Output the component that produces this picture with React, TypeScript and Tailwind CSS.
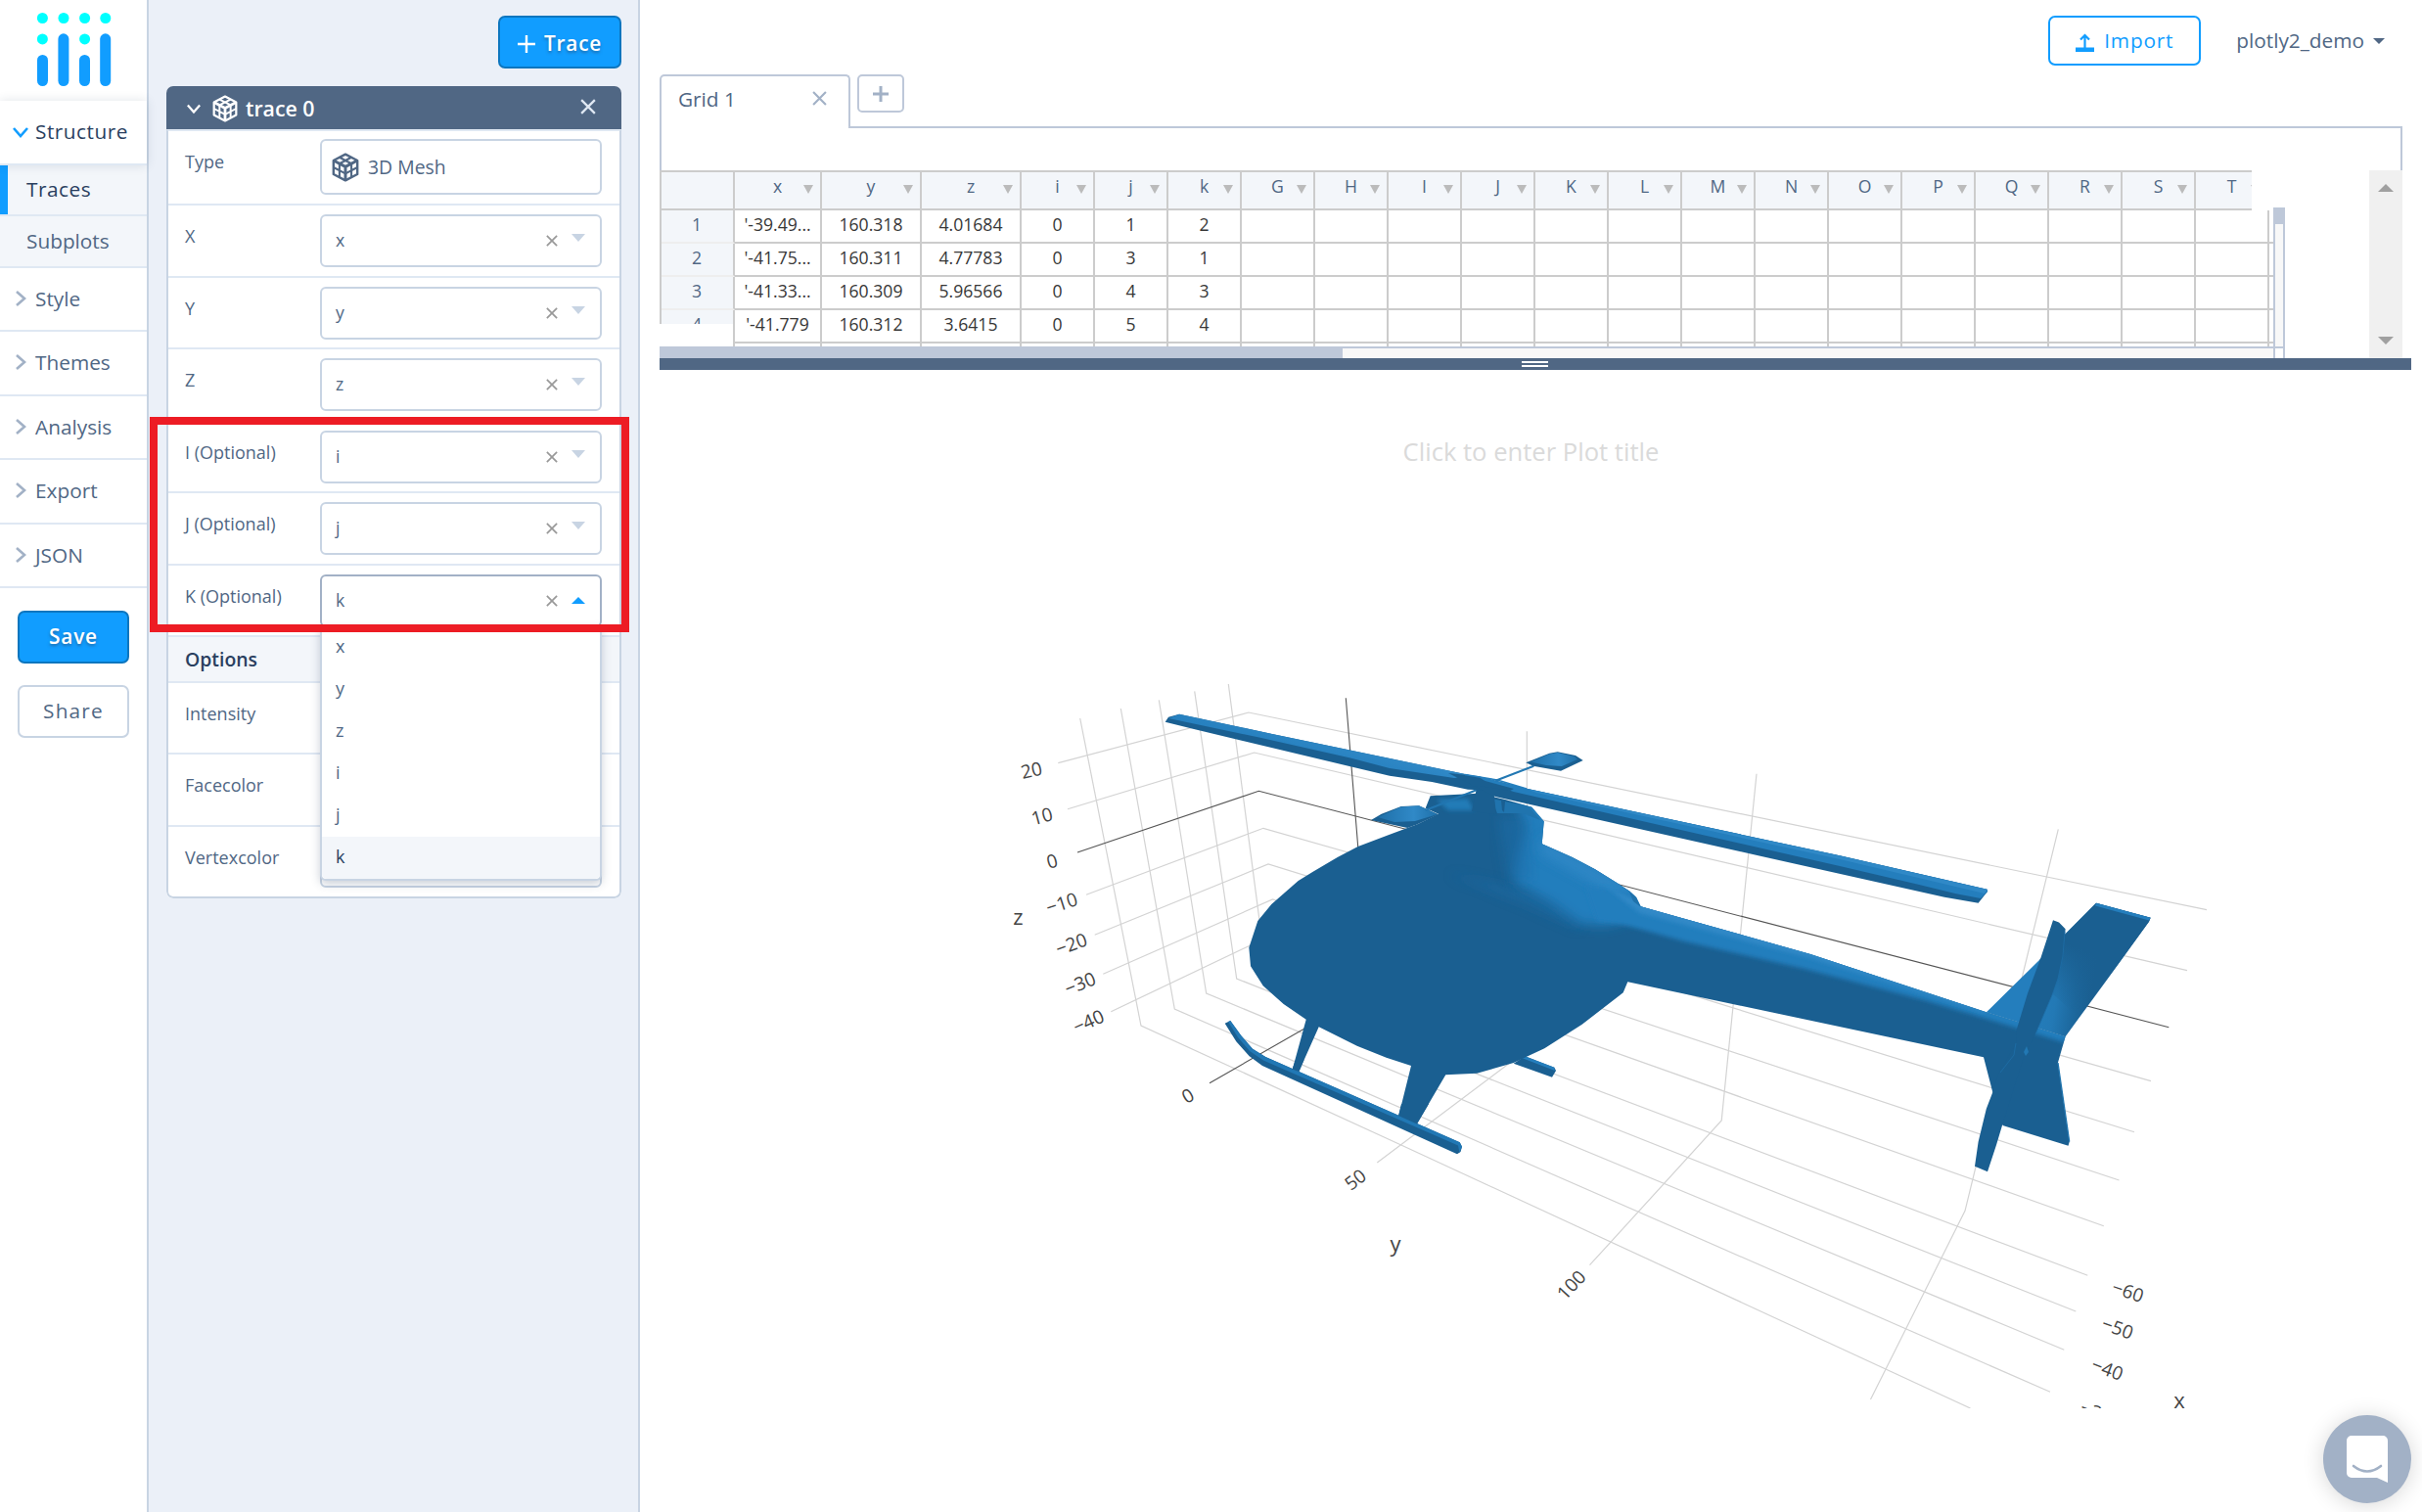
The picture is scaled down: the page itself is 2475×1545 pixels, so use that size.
import React from "react";

const GRID_COLUMNS = ["x", "y", "z", "i", "j", "k", "G", "H", "I", "J", "K", "L", "M", "N", "O", "P", "Q", "R", "S", "T"];
const GRID_ROWS = [
  ["'-39.49...", "160.318", "4.01684", "0", "1", "2"],
  ["'-41.75...", "160.311", "4.77783", "0", "3", "1"],
  ["'-41.33...", "160.309", "5.96566", "0", "4", "3"],
  ["'-41.779", "160.312", "3.6415", "0", "5", "4"],
  [],
];

function columnWidth(index: number) {
  if (index === 0) return "w-[89px]";
  if (index < 3) return "w-[102px]";
  return "w-[75px]";
}

function MeshIcon({ className }: { className: string }) {
  return (
    <svg viewBox="0 0 28 30" className={className} fill="none" stroke="currentColor" strokeWidth="2.4" strokeLinejoin="round">
      <path d="M14 1.6 26.2 8v14L14 28.4 1.8 22V8Z" />
      <path d="M1.8 8 14 14.4 26.2 8M14 14.4v14" strokeWidth="3" />
      <path d="M1.8 15 14 21.4 26.2 15M7.9 11.2v14M20.1 11.2v14M7.9 4.8l12.2 6.4M20.1 4.8 7.9 11.2" strokeWidth="2.1" />
    </svg>
  );
}

function Chevron({ dir, className }: { dir: "down" | "right"; className: string }) {
  return (
    <svg viewBox="0 0 16 16" className={className} fill="none" stroke="currentColor" strokeWidth="2.6">
      <path d={dir === "down" ? "M1 4l7 8 7-8" : "M4 1l8 7-8 7"} />
    </svg>
  );
}

function Cross({ className }: { className: string }) {
  return (
    <svg viewBox="0 0 14 14" className={className} fill="none" stroke="currentColor" strokeWidth="2">
      <path d="M1 1l12 12M13 1L1 13" />
    </svg>
  );
}

function Logo() {
  return (
    <svg viewBox="0 0 76 75" className="ml-[38px] h-[75px] w-[76px]">
      <g fill="#00ffff">
        <circle cx="5.4" cy="5.5" r="5.5" />
        <circle cx="27" cy="5.5" r="5.5" />
        <circle cx="48.6" cy="5.5" r="5.5" />
        <circle cx="69.8" cy="5.5" r="5.5" />
        <circle cx="5.4" cy="26.9" r="5.5" />
        <circle cx="48.6" cy="26.9" r="5.5" />
      </g>
      <g fill="#119dff">
        <rect x="0" y="43" width="11" height="32" rx="5.5" />
        <rect x="21.4" y="21.3" width="11" height="53.7" rx="5.5" />
        <rect x="43" y="43" width="11" height="32" rx="5.5" />
        <rect x="64.2" y="21.3" width="11" height="53.7" rx="5.5" />
      </g>
    </svg>
  );
}

function NavItem({ label, height }: { label: string; height: string }) {
  return (
    <div className={`${height} flex items-center border-b-2 border-[#dfe8f3] pl-[13px] text-[20.8px] text-[#506784]`}>
      <Chevron dir="right" className="mr-[7px] h-[16px] w-[16px] -translate-y-px text-[#a2b1c6]" />
      {label}
    </div>
  );
}

function Sidebar() {
  return (
    <nav className="flex w-[152px] shrink-0 flex-col border-r-2 border-[#c8d4e3] bg-white">
      <div className="h-[103px] pt-[13px]">
        <Logo />
      </div>
      <div className="relative z-10 flex h-[66px] items-center border-b-2 border-[#dfe8f3] bg-white pl-[13px] text-[20.8px] font-semibold tracking-[-0.2px] text-[#2a3f5f] shadow-[0_0_10px_rgba(42,63,95,0.14)]">
        <Chevron dir="down" className="mr-[7px] h-[16px] w-[16px] text-[#119dff]" />
        <span className="font-medium tracking-[0.5px]">Structure</span>
      </div>
      <div className="flex h-[52px] items-center border-b-2 border-[#dfe8f3] bg-[#f3f6fa] text-[20.8px] font-semibold text-[#2a3f5f]">
        <span className="mr-[19px] h-full w-2 bg-[#119dff]" />
        <span className="font-medium tracking-[0.5px]">Traces</span>
      </div>
      <div className="flex h-[53px] items-center border-b-2 border-[#dfe8f3] bg-[#f3f6fa] pl-[27px] text-[20.8px] text-[#506784]">
        Subplots
      </div>
      <NavItem label="Style" height="h-[65px]" />
      <NavItem label="Themes" height="h-[66px]" />
      <NavItem label="Analysis" height="h-[65px]" />
      <NavItem label="Export" height="h-[66px]" />
      <NavItem label="JSON" height="h-[65px]" />
      <button className="mt-[23px] ml-[18px] flex h-[54px] w-[114px] shrink-0 items-center justify-center rounded-[7px] border-2 border-[#0d76bf] bg-[#119dff] text-[20.8px] font-semibold tracking-[0.8px] text-white [text-shadow:0_2px_3px_rgba(42,63,95,0.5)]">
        Save
      </button>
      <button className="mt-[22px] ml-[18px] flex h-[54px] w-[114px] shrink-0 items-center justify-center rounded-[7px] border-2 border-[#c8d4e3] bg-white text-[20.8px] font-medium tracking-[1.2px] text-[#506784]">
        Share
      </button>
    </nav>
  );
}

function Select({ value, open = false, height = "h-[54px]" }: { value: string; open?: boolean; height?: string }) {
  return (
    <div
      className={`${height} flex w-[288px] items-center rounded-[6px] border-2 bg-white pl-[14px] pr-[15px] text-[17.6px] text-[#506784] ${open ? "border-[#a2b1c6]" : "border-[#c8d4e3]"}`}
    >
      <span className="flex-1 pb-[2px]">{value}</span>
      {value && <Cross className="mr-[14px] h-[12px] w-[12px] text-[#999999]" />}
      {value && (
        <svg viewBox="0 0 14 8" className={`h-[8px] w-[14px] ${open ? "" : "-translate-y-[3px]"}`} fill={open ? "#119dff" : "#c8d4e3"}>
          <path d={open ? "M0 7L7 0l7 7z" : "M0 0h14L7 8z"} />
        </svg>
      )}
    </div>
  );
}

function Field({ label, height, children, last = false }: { label: string; height: string; children?: React.ReactNode; last?: boolean }) {
  return (
    <div className={`${height} flex items-start border-[#dfe8f3] pt-[9px] ${last ? "" : "border-b-2"}`}>
      <div className="mt-[9px] w-[155px] pl-[17px] text-[18px] leading-[26px] text-[#506784]">{label}</div>
      {children}
    </div>
  );
}

function Dropdown() {
  return (
    <div className="absolute top-[640px] left-[327px] z-10 w-[288px] rounded-b-[6px] border-x-2 border-b-2 border-[#c8d4e3] bg-white text-[18px] text-[#506784] shadow-[0_3px_10px_rgba(42,63,95,0.25)]">
      {["x", "y", "z", "i", "j", "k"].map((o) => (
        <div
          key={o}
          className={`flex h-[43px] items-center pb-[2px] pl-[14px] ${o === "k" ? "rounded-b-[5px] bg-[#f3f6fa] font-medium text-[#2a3f5f]" : ""}`}
        >
          {o}
        </div>
      ))}
    </div>
  );
}

function TracePanel() {
  return (
    <aside className="flex w-[502px] shrink-0 flex-col border-r-2 border-[#c8d4e3] bg-[#ebf0f8] pl-[18px]">
      <button className="mt-4 ml-[339px] flex h-[54px] w-[126px] shrink-0 items-center justify-center gap-[9px] rounded-[7px] border-2 border-[#0d76bf] bg-[#119dff] pt-[3px] text-[20.8px] font-semibold tracking-[0.8px] text-white [text-shadow:0_2px_3px_rgba(42,63,95,0.5)]">
        <svg viewBox="0 0 18 18" className="h-[18px] w-[18px]" stroke="white" strokeWidth="2.4">
          <path d="M9 0v18M0 9h18" />
        </svg>
        Trace
      </button>
      <div className="mt-[18px] w-[465px] overflow-hidden rounded-[7px] bg-white">
        <div className="flex h-[44px] items-center bg-[#506784] pt-px pl-[21px] pr-[26px] text-white">
          <Chevron dir="down" className="h-[14px] w-[14px]" />
          <MeshIcon className="mr-[8px] ml-[12px] h-[28px] w-[26px]" />
          <span className="flex-1 pt-px text-[21.3px] font-semibold">trace 0</span>
          <Cross className="h-[16px] w-[16px] -translate-y-[2px] text-[#dfe8f3]" />
        </div>
        <div className="rounded-b-[7px] border-2 border-[#c8d4e3] border-t-[#dfe8f3]">
          <Field label="Type" height="h-[76px]">
            <div className="-mt-px flex h-[57px] w-[288px] items-center rounded-[6px] border-2 border-[#c8d4e3] bg-white pl-[10px] text-[19.4px] text-[#506784]">
              <MeshIcon className="mr-[9px] h-[30px] w-[28px]" />
              3D Mesh
            </div>
          </Field>
          <Field label="X" height="h-[74px]"><Select value="x" /></Field>
          <Field label="Y" height="h-[73px]"><Select value="y" /></Field>
          <Field label="Z" height="h-[74px]"><Select value="z" /></Field>
          <Field label="I (Optional)" height="h-[73px]"><Select value="i" /></Field>
          <Field label="J (Optional)" height="h-[74px]"><Select value="j" /></Field>
          <Field label="K (Optional)" height="h-[73px]"><Select value="k" open /></Field>
          <div className="flex h-[47px] items-center border-b-2 border-[#dfe8f3] bg-[#f3f6fa] pl-[17px] text-[19.4px] font-semibold text-[#2a3f5f]">
            <span>Options</span>
          </div>
          <Field label="Intensity" height="h-[73px]"><Select value="" /></Field>
          <Field label="Facecolor" height="h-[74px]"><Select value="" /></Field>
          <Field label="Vertexcolor" height="h-[71px]" last><Select value="" height="h-[53px]" /></Field>
        </div>
      </div>
    </aside>
  );
}

function TopBar() {
  return (
    <div className="flex h-[76px] items-start justify-end pt-4 pr-[38px]">
      <button className="flex h-[51px] w-[156px] items-center rounded-[7px] border-2 border-[#119dff] pl-[26px] text-[20.8px] tracking-[0.8px] text-[#119dff]">
        <svg viewBox="0 0 19 19" className="mt-[3px] mr-[10px] h-[19px] w-[19px]" fill="#119dff">
          <path d="M0 14.500h19v4.500H0z" />
          <path d="M9.500 15V2.500M5 6.500l4.500-4.500L14 6.500" fill="none" stroke="#119dff" strokeWidth="2.200" />
        </svg>
        Import
      </button>
      <div className="ml-[36px] flex h-[51px] items-center text-[20.8px] text-[#506784]">
        plotly2_demo
        <svg viewBox="0 0 12 6" className="ml-[9px] h-[6px] w-[12px]" fill="#506784">
          <path d="M0 0h12L6 6z" />
        </svg>
      </div>
    </div>
  );
}

function DataGrid() {
  return (
    <div className="ml-5">
      <div className="flex h-[53px] items-start">
        <div className="relative z-10 flex h-[55px] w-[195px] items-center rounded-t-[5px] border-2 border-b-0 border-[#bec8d9] bg-white pr-[22px] pl-[17px] text-[20.8px] text-[#506784]">
          <span className="flex-1 pb-[6px]">Grid 1</span>
          <Cross className="h-[15px] w-[15px] -translate-y-[4px] text-[#a2b1c6]" />
        </div>
        <div className="ml-[7px] flex h-[39px] w-[48px] items-center justify-center rounded-[5px] border-2 border-[#bec8d9]">
          <svg viewBox="0 0 16 16" className="h-[16px] w-[16px]" stroke="#a2b1c6" strokeWidth="3">
            <path d="M8 0v16M0 8h16" />
          </svg>
        </div>
      </div>
      <div className="h-[45px] w-[1781px] border-2 border-b-0 border-[#bec8d9]" />
      <div className="flex h-[192px] w-[1781px]">
        <div className="w-[1661px]">
          <div className="flex h-[41px] w-[1627px] overflow-hidden border-y-2 border-l-2 border-[#cccccc] bg-[#f3f6fa] text-[17.6px] text-[#506784]">
            <div className="w-[75px] shrink-0 border-r-2 border-[#cccccc]" />
            {GRID_COLUMNS.map((c, i) => (
              <div key={c} className={`${columnWidth(i)} relative shrink-0 border-r-2 border-[#cccccc] text-center leading-[29px]`}>
                {c}
                <svg viewBox="0 0 10 9" className="absolute top-[13px] right-[7px] h-[9px] w-[10px]" fill="#bbbbbb">
                  <path d="M0 0h10L5 9z" />
                </svg>
              </div>
            ))}
          </div>
          <div className="flex h-[151px]">
            <div className="w-[77px] shrink-0">
              <div className="h-[116px] overflow-hidden border-l-2 border-[#cccccc] bg-[#f3f6fa]">
                {[1, 2, 3, 4].map((n) => (
                  <div key={n} className="h-[34px] border-r-2 border-b-2 border-r-[#cccccc] border-b-[#eeeeee] pr-px text-center text-[17.6px] leading-[29px] text-[#506784]">
                    {n}
                  </div>
                ))}
              </div>
              <div className="ml-[75px] h-[23px] w-[2px] bg-[#cccccc]" />
            </div>
            <div className="w-[1572px] shrink-0 overflow-hidden">
              <div className="h-[139px] w-full overflow-hidden">
                {GRID_ROWS.map((row, r) => (
                  <div key={r} className="flex h-[34px] w-[1700px] border-b-2 border-[#cccccc]">
                    {GRID_COLUMNS.map((c, i) => (
                      <div key={c} className={`${columnWidth(i)} shrink-0 border-r-2 border-[#cccccc] text-center text-[17.6px] leading-[29px] text-[#373737]`}>
                        {row[i] ?? ""}
                      </div>
                    ))}
                  </div>
                ))}
              </div>
              <div className="h-[12px] border-t-2 border-[#bec8d9] bg-[#f8f8f8]">
                <div className="h-[10px] w-[621px] bg-[#bec8d9]" />
              </div>
            </div>
            <div className="-mt-[3px] flex h-[154px] w-[12px] shrink-0 flex-col border-x-2 border-[#bec8d9] bg-[#f8f8f8]">
              <div className="h-[17px] bg-[#bec8d9]" />
              <div className="h-[125px]" />
              <div className="h-[12px] border-t-2 border-[#bec8d9] bg-white" />
            </div>
          </div>
        </div>
        <div className="ml-auto flex w-[34px] flex-col items-center justify-between bg-[#f0f0f0] py-[14px]">
          <svg viewBox="0 0 16 8" className="h-[8px] w-[16px]" fill="#a0a0a0"><path d="M0 8L8 0l8 8z" /></svg>
          <svg viewBox="0 0 16 8" className="h-[8px] w-[16px]" fill="#a0a0a0"><path d="M0 0h16L8 8z" /></svg>
        </div>
      </div>
      <div className="relative flex h-[12px] w-[1790px] justify-center bg-[#506784]">
        <div className="absolute -top-[12px] left-0 h-[12px] w-[78px] bg-[#bec8d9]" />
        <div className="mt-[3px] -ml-px h-[6px] w-[27px] border-y-2 border-white" />
      </div>
    </div>
  );
}

const AXIS_LINES = [
  "M1103.700 734 1166 1048 1430.700 1169.500 2013.500 1439",
  "M1145.300 724 1200.300 1031 2095 1422.300",
  "M1184.300 715.300 1232.700 1015 2109.300 1379.300",
  "M1220.700 706.300 1263.700 1000 2121.300 1340",
  "M1255.300 699 1293 986 2133.300 1303.300",
  "M1081.300 779.700 1276 728 2255 929.700",
  "M1091 826.700 1281.700 769 2235 991.700",
  "M1110 914.300 1291 846.300 2198 1104.700",
  "M1118.700 955.300 1296 883 2181 1156.700",
  "M1127.300 995.300 1300.500 919 2165.500 1206",
  "M1135.300 1033.700 1305 953 2149.800 1252.700",
  "M1560.300 747.300V1073L1407.300 1188",
  "M1795 790.700 1759.200 1145 1624.500 1292.700",
  "M2103.300 847.300 2008 1237.300 1911.500 1430",
];

const AXIS_LABELS: [string, number, number, number][] = [
  ["20", 1054, 787, -13],
  ["10", 1064.7, 834, -15],
  ["0", 1075, 880, -16],
  ["−10", 1085, 923, -18],
  ["−20", 1094.7, 964.7, -20],
  ["−30", 1103.7, 1005, -22],
  ["−40", 1112.3, 1043.7, -24],
  ["0", 1213.7, 1119.7, -30],
  ["50", 1385, 1205.3, -37],
  ["100", 1605.7, 1313, -47],
  ["−60", 2174.5, 1319.5, 19],
  ["−50", 2164, 1357, 20],
  ["−40", 2153.5, 1399, 21],
  ["−30", 2142, 1443, 21],
];

function Helicopter() {
  const dark = "#1a5f91";
  const mid = "#247ebd";
  const light = "#3089c7";
  return (
    <g>
      <defs>
        <filter id="soft" x="-20%" y="-20%" width="140%" height="140%"><feGaussianBlur stdDeviation="6" /></filter>
        <filter id="soft2" x="-20%" y="-50%" width="140%" height="200%"><feGaussianBlur stdDeviation="2" /></filter>
        <linearGradient id="blade" gradientUnits="userSpaceOnUse" x1="1300" y1="738" x2="1293" y2="764">
          <stop offset="0" stopColor={light} /><stop offset="1" stopColor={mid} />
        </linearGradient>
        <linearGradient id="fin" gradientUnits="userSpaceOnUse" x1="2072" y1="1020" x2="2135" y2="1030">
          <stop offset="0" stopColor={mid} /><stop offset="0.45" stopColor="#2379b5" /><stop offset="0.75" stopColor="#1d699f" /><stop offset="1" stopColor={dark} />
        </linearGradient>
        <linearGradient id="finFade" gradientUnits="userSpaceOnUse" x1="2150" y1="960" x2="2122" y2="1040">
          <stop offset="0.2" stopColor={dark} /><stop offset="1" stopColor={dark} stopOpacity="0" />
        </linearGradient>
        <linearGradient id="paddle" x1="0" y1="0" x2="1" y2="0">
          <stop offset="0" stopColor="#1f70a9" /><stop offset="0.6" stopColor={light} /><stop offset="1" stopColor="#1f70a9" />
        </linearGradient>
        <clipPath id="hull">
          <path d="M1461.700 813.300 1510 810.700 1538 817 1565.300 824.700 1577.700 839.300 1575.700 862.300 1606.700 876 1630 888.300 1653.300 902.700 1665 910.500 1672 917 1676.500 926.300 1850 975 2029.800 1034.300 2110.600 1059.300 2102.900 1086 2027 1080.300 1663.300 1003.300 1658.700 1014.300 1509 1096 1276 980 1400 850Z" />
        </clipPath>
      </defs>

      <path d="M1558.300 1079.300 1588.300 1090.700 1590 1094 1586 1100.700 1546.700 1086.700Z" fill={dark} />
      <path d="M1558.300 1079.300 1588.300 1090.700 1588.800 1094 1555 1081Z" fill={mid} />

      <path d="M2029.800 1034.300 2084 981 2142 922.700 2197.600 937.700 2196 941.700 2110.600 1059.300Z" fill="url(#fin)" />
      <path d="M2084 981 2142 922.700 2197.600 937.700 2196 941.700 2125 1040 2098 1016Z" fill="url(#finFade)" />
      <path d="M2142 922.700 2197.600 937.700 2196 940.500 2141 925.500Z" fill={mid} />

      <path
        d="M1448.300 842.300 1420 852.700 1387.700 865 1366.700 876 1341.700 890.700 1326.700 900 1299.300 924 1285.300 941 1276.300 968.300 1278 987.300 1290.700 1007.300 1311.700 1026 1334.700 1041.700 1320.700 1092.700 1327.300 1095 1347.700 1049.300 1386.700 1068.700 1416.700 1080.700 1442 1089 1429.300 1140 1448 1148.300 1477.300 1098.300 1509.300 1096.700 1546.700 1086 1578.300 1071.300 1616.700 1046.700 1658.700 1014.300 1663.300 1003.300 2027 1080.300 2036 1115 2046.500 1150 2113.500 1170.700 2114.700 1166.700 2102.900 1086 2110.600 1059.300 2029.800 1034.300 1850 975 1676.500 926.300 1672 917 1665 910.500 1653.300 902.700 1630 888.300 1606.700 876 1575.700 862.300 1577.700 839.300 1565.300 824.700 1538 817 1510 810.700 1461.700 813.300 1456.700 825.700 1470 831.700Z"
        fill={dark}
      />
      <g clipPath="url(#hull)">
        <path d="M1480 893 1530 903 1600 925 1616 950 1560 925Z" fill="#1d6ba3" opacity="0.7" filter="url(#soft)" />
        <path d="M1552 810 1590 820 1590 862 1685 905 1685 935 1640 946 1615 944 1585 922 1548 902 1550 880 1558 845 1552 830Z" fill={mid} filter="url(#soft)" />
        <path d="M1530 834 1560 834 1566 900 1540 898Z" fill="#1f70aa" opacity="0.5" filter="url(#soft)" />
        <path d="M1575 855 1700 925 1690 933 1660 922 1620 898 1575 873Z" fill={light} opacity="0.85" filter="url(#soft)" />
        <path d="M1620 905 1690 915 1850 962 2029.800 1028 2120 1052 2109 1065 2029.800 1041 1966.500 1022 1844 990 1721.600 962 1660 945 1632 941Z" fill={mid} filter="url(#soft2)" />
        <path d="M1640 905 1676 922 1850 970 2029 1031 2029 1035 1850 979 1676 933Z" fill={light} filter="url(#soft2)" />
        <path d="M1664 909 1672 917 1677 927 1669 921Z" fill="#2072ab" />
        <path d="M1468 817 1500 816 1506 828 1480 828Z" fill="#247bb7" filter="url(#soft2)" />
        <path d="M1524 816 1562 824 1574 838 1556 831 1530 831Z" fill="#2074ae" />
        <path d="M1534 818 1538 819 1537 830 1535 828Z" fill={dark} />
      </g>
      <path d="M2103 1086 2114.700 1166.700" stroke="#2175af" strokeWidth="1.300" />

      <path d="M1401 838 1411.700 831.700 1431.700 824 1450 823.300 1470 832.300 1448.300 842.300 1438.300 846Z" fill={dark} />
      <path d="M1408 835 1431.700 824.500 1450 823.300 1469 832 1446 839 1425 840Z" fill="url(#paddle)" />
      <path d="M1456.700 828 1510 806.700" stroke="#2175b0" strokeWidth="2" />

      <path d="M1509 805 1526 805 1529 832 1504 829Z" fill={dark} />
      <path d="M1190.700 737.700 1194 732.700 1205 729.700 1300 750 1520 795.700 1530 808 1500 806.700 1463.300 799 1420 792.700 1380 783.300 1220 745Z" fill={dark} />
      <path d="M1194 734 1205 729.700 1300 750 1520 795.700 1486 795 1420 785 1380 774.500 1286.700 753.500Z" fill="url(#blade)" />
      <path d="M1480 790 1510 793 1560 805.700 1880 874.300 2030.600 908.700 2031 911 2021.600 922.700 1987 916.700 1800 875 1528 814Z" fill={dark} />
      <path d="M1510 793 1560 805.700 1880 874.300 2030.600 908.700 2031 911 2024 918 1999 913.300 1958 903.300 1880 885 1546.700 809 1520 800Z" fill={mid} />
      <path d="M1560 806 1880 874.500 2030.600 909 2028 913 1880 878 1570 810Z" fill={light} />
      <path d="M1487 795 1497 792 1514 797 1547 806 1543 808 1518 804 1504 803 1500 798Z" fill={dark} />
      <path d="M1497 791.500 1530 797 1560 806" stroke={mid} strokeWidth="1.500" fill="none" />

      <path d="M1528.300 797.700 1567.300 782.700" stroke="#2278b3" strokeWidth="2" />
      <path d="M1559.300 779.300 1583.300 769.700 1591.700 768.300 1610 772 1617.700 777 1595 787.700 1566.700 782.700Z" fill={dark} />
      <path d="M1564 778.500 1583.300 770.500 1591.700 769 1609 773 1612 776 1596 783 1580 782Z" fill="url(#paddle)" />

      <path d="M1251.700 1045.700 1257.300 1043 1268.300 1058.300 1280 1071.700 1293.300 1080 1491.700 1167.300 1494 1171.700 1492.500 1177 1489 1179.300 1290 1089 1276.700 1079.300 1263.300 1064.300Z" fill={dark} />
      <path d="M1255 1044 1257.300 1043 1268.300 1058.300 1280 1071.700 1293.300 1080 1491.700 1167.300 1494 1171.700 1491.500 1178 1490 1170.500 1291 1083.500 1277 1074 1265 1060Z" fill="#2178b5" />
      <path d="M1324 1083 1332.500 1083 1327.500 1095 1320.500 1092.500ZM1432 1128 1460 1128 1448 1148.500 1429 1140Z" fill={dark} />

      <path d="M2098 940.300 2104 942.500 2110.600 949.300 2108.600 976.700 2103 1000 2097 1016.700 2080 1056.700 2068.600 1078 2046 1150 2040 1170 2031 1197.300 2018 1191.700 2021.600 1166.700 2029.800 1133 2036.700 1115 2042 1097 2060 1066.700 2060.400 1053.300 2072 1015 2085 980Z" fill={dark} />
      <path d="M2110 952 2108 977 2103 1000 2097 1017 2080 1057M2060 1066 2058 1078 2044 1096" stroke="#1e6fa8" strokeWidth="0.800" fill="none" />
      <path d="M2071 1069 2073 1075 2070 1079 2068 1075Z" fill="#2278b3" />
    </g>
  );
}

function Plot() {
  return (
    <svg viewBox="654 378 1821 1167" className="block h-[1167px] w-[1821px]" fontFamily="'Open Sans', sans-serif">
      <defs>
        <clipPath id="scene"><rect x="674" y="500" width="1780" height="939" /></clipPath>
      </defs>
      <text x="1564.500" y="470.500" textAnchor="middle" fontSize="25.600" fill="#dadada">Click to enter Plot title</text>
      <g clipPath="url(#scene)">
        <g fill="none" stroke="#d3d3d3" strokeWidth="1.200">
          {AXIS_LINES.map((d) => <path key={d} d={d} />)}
        </g>
        <g fill="none" stroke="#555555" strokeWidth="1.100">
          <path d="M1101 871 1286.300 808.300 2216.300 1049.700" />
          <path d="M1375.300 713.300 1387.700 865 1396 1015 1236 1106.700" />
        </g>
        <Helicopter />
        <g fill="#444444" textAnchor="middle">
          {AXIS_LABELS.map(([t, x, y, a]) => (
            <text key={`${t}-${x}`} transform={`translate(${x} ${y}) rotate(${a})`} y="6.800" fontSize="19">{t}</text>
          ))}
          <g fontSize="22">
            <text x="1040.300" y="944.500">z</text>
            <text x="1426" y="1279">y</text>
            <text x="2227" y="1439">x</text>
          </g>
        </g>
      </g>
    </svg>
  );
}

export default function App() {
  return (
    <div className="relative flex h-[1545px] w-[2475px] overflow-hidden bg-white font-['Open_Sans',sans-serif]">
      <Sidebar />
      <TracePanel />
      <main className="flex w-[1821px] flex-col">
        <TopBar />
        <DataGrid />
        <Plot />
      </main>
      <Dropdown />
      <div className="absolute top-[426px] left-[153px] z-20 h-[220px] w-[490px] border-8 border-[#ed1c24]" />
      <div className="absolute top-[1446px] left-[2374px] flex h-[90px] w-[90px] items-center justify-center rounded-full bg-[#a2b1c6] shadow-[0_2px_22px_rgba(0,0,0,0.16)]">
        <svg viewBox="0 0 42 48" className="h-[48px] w-[42px]">
          <path d="M5 0h32a5 5 0 0 1 5 5v43l-11-5H5a5 5 0 0 1-5-5V5a5 5 0 0 1 5-5z" fill="white" />
          <path d="M7 31q14 11 28 0" fill="none" stroke="#a2b1c6" strokeWidth="2.600" strokeLinecap="round" />
        </svg>
      </div>
    </div>
  );
}
